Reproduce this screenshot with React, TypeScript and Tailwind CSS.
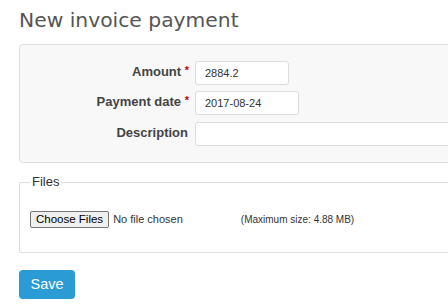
export default function App() {
  const label = "text-[13px] font-bold text-[#444] text-right pr-[1px] -mt-[3px]";
  const input =
    "h-[24px] rounded-[3px] border border-[#dcdcdc] bg-white px-[9px] text-[11px] text-[#333] outline-none";

  return (
    <div className="w-full h-[305px] overflow-hidden bg-white font-['Liberation_Sans',Arial,sans-serif]">
      <div className="w-[760px] pl-[19px]">
        <h1 className="pt-[6px] pb-[9px] text-[20.3px] leading-[29px] text-[#555] font-['DejaVu_Sans',Verdana,sans-serif]">
          New invoice payment
        </h1>

        <div className="rounded-[4px] border border-[#dddddd] bg-[#f8f8f8] pt-[16px] pb-[16px]">
          <div className="grid grid-cols-[170px_1fr] gap-x-[5px] items-center">
            <div className={label}>
              Amount <span className="text-[#c00] text-[11px] align-top">*</span>
            </div>
            <input className={input + " w-[94px]"} defaultValue="2884.2" />

            <div className={label + " mt-[3px]"}>
              Payment date <span className="text-[#c00] text-[11px] align-top">*</span>
            </div>
            <input className={input + " w-[104px] mt-[6px]"} defaultValue="2017-08-24" />

            <div className={label + " mt-[4px] pr-[2px]"}>Description</div>
            <input className={input + " w-[520px] mt-[7px]"} defaultValue="" />
          </div>
        </div>

        <fieldset className="mt-[10px] rounded-[2px] border border-[#dddddd] px-[10px] pb-[24px]">
          <legend className="px-[2px] text-[13px] leading-[18px] text-[#333]">Files</legend>
          <div className="mt-[20px] flex items-center">
            <button className="h-[17px] rounded-[2px] border border-[#767676] bg-[#efefef] px-[5px] text-[11.5px] leading-[15px] text-black">
              Choose Files
            </button>
            <span className="ml-[4px] text-[11px] text-[#333]">No file chosen</span>
            <span className="ml-[58px] text-[10px] text-[#333]">(Maximum size: 4.88 MB)</span>
          </div>
        </fieldset>

        <button className="mt-[17px] h-[29px] w-[56px] rounded-[4px] bg-[#2a9bd4] text-[14.5px] text-white">
          Save
        </button>
      </div>
    </div>
  );
}
